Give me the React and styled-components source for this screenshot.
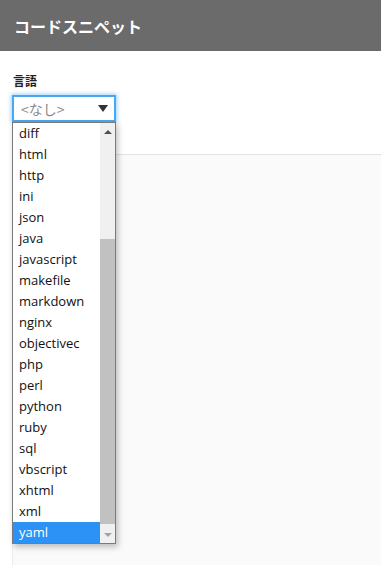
import React from 'react'
import styled, { createGlobalStyle } from 'styled-components'

const GlobalStyle = createGlobalStyle`
  html, body { margin: 0; padding: 0; background: #fff; }
  body { font-family: "Open Sans", "Noto Sans CJK JP", sans-serif; }
`

const languages = [
  'diff', 'html', 'http', 'ini', 'json', 'java', 'javascript', 'makefile',
  'markdown', 'nginx', 'objectivec', 'php', 'perl', 'python', 'ruby', 'sql',
  'vbscript', 'xhtml', 'xml', 'yaml'
]

const Page = styled.div`
  width: 381px;
  height: 565px;
  overflow: hidden;
  display: flex;
  flex-direction: column;
`

const Header = styled.header`
  height: 51px;
  background: #6b6b6b;
  display: flex;
  align-items: center;
  padding: 0 14px;
  flex-shrink: 0;
`

const Title = styled.h1`
  margin: 0;
  color: #fff;
  font-family: "Noto Sans CJK JP", sans-serif;
  font-size: 16px;
  font-weight: 700;
`

const Form = styled.div`
  padding: 21px 12px 0 12px;
  display: flex;
  flex-direction: column;
`

const Label = styled.label`
  font-family: "Noto Sans CJK JP", sans-serif;
  font-size: 12px;
  font-weight: 700;
  color: #222;
  margin-left: 1px;
  line-height: 18px;
`

const SelectWrap = styled.div`
  position: relative;
  width: 104px;
  margin-top: 5px;
`

const SelectBox = styled.div`
  box-sizing: border-box;
  height: 27px;
  border: 2px solid #4aa8f0;
  box-shadow: 0 0 4px 1px rgba(80, 170, 250, 0.55);
  display: flex;
  align-items: center;
  justify-content: space-between;
  padding: 0 6px 0 7px;
  font-family: "Noto Sans CJK JP", sans-serif;
  font-size: 14px;
  color: #8a8a8a;
  background: #fff;
`

const Caret = styled.span`
  width: 0;
  height: 0;
  border-left: 5px solid transparent;
  border-right: 5px solid transparent;
  border-top: 7px solid #333;
`

const Popup = styled.ul`
  position: absolute;
  top: 27px;
  left: 0;
  box-sizing: border-box;
  width: 104px;
  height: 422px;
  margin: 0;
  padding: 0;
  list-style: none;
  background: #fff;
  border: 1px solid #7a7a7a;
  box-shadow: 2px 3px 6px rgba(0, 0, 0, 0.25);
  display: flex;
  z-index: 5;
`

const Items = styled.div`
  flex: 1;
  display: flex;
  flex-direction: column;
`

const Item = styled.li`
  height: 21px;
  line-height: 21px;
  padding-left: 6px;
  font-size: 13px;
  color: ${p => (p.$selected ? '#fff' : '#111')};
  background: ${p => (p.$selected ? '#2d92f5' : 'transparent')};
`

const Scrollbar = styled.div`
  width: 15px;
  background: #f0f0f0;
  display: flex;
  flex-direction: column;
  align-items: center;
`

const ArrowBtn = styled.div`
  height: 17px;
  display: flex;
  align-items: center;
  justify-content: center;
  flex-shrink: 0;
`

const Arrow = styled.span`
  width: 0;
  height: 0;
  border-left: 4px solid transparent;
  border-right: 4px solid transparent;
  ${p => (p.$up
    ? 'border-bottom: 4px solid #505050;'
    : 'border-top: 4px solid #a3a3a3;')}
`

const Track = styled.div`
  flex: 1;
  width: 100%;
  display: flex;
  flex-direction: column;
  justify-content: flex-end;
`

const Thumb = styled.div`
  height: 285px;
  margin: 0 0 2px 0;
  width: 100%;
  background: #c1c1c1;
`

const Editor = styled.div`
  margin: 32px 0 0 12px;
  flex: 1;
  border-top: 1px solid #e3e3e3;
  border-left: 1px solid #ececec;
  background: #fafafa;
`

export default function App() {
  return (
    <Page>
      <GlobalStyle />
      <Header>
        <Title>コードスニペット</Title>
      </Header>
      <Form>
        <Label>言語</Label>
        <SelectWrap>
          <SelectBox>
            <span>&lt;なし&gt;</span>
            <Caret />
          </SelectBox>
          <Popup>
            <Items>
              {languages.map(l => (
                <Item key={l} $selected={l === 'yaml'}>{l}</Item>
              ))}
            </Items>
            <Scrollbar>
              <ArrowBtn><Arrow $up /></ArrowBtn>
              <Track><Thumb /></Track>
              <ArrowBtn><Arrow /></ArrowBtn>
            </Scrollbar>
          </Popup>
        </SelectWrap>
      </Form>
      <Editor />
    </Page>
  )
}
